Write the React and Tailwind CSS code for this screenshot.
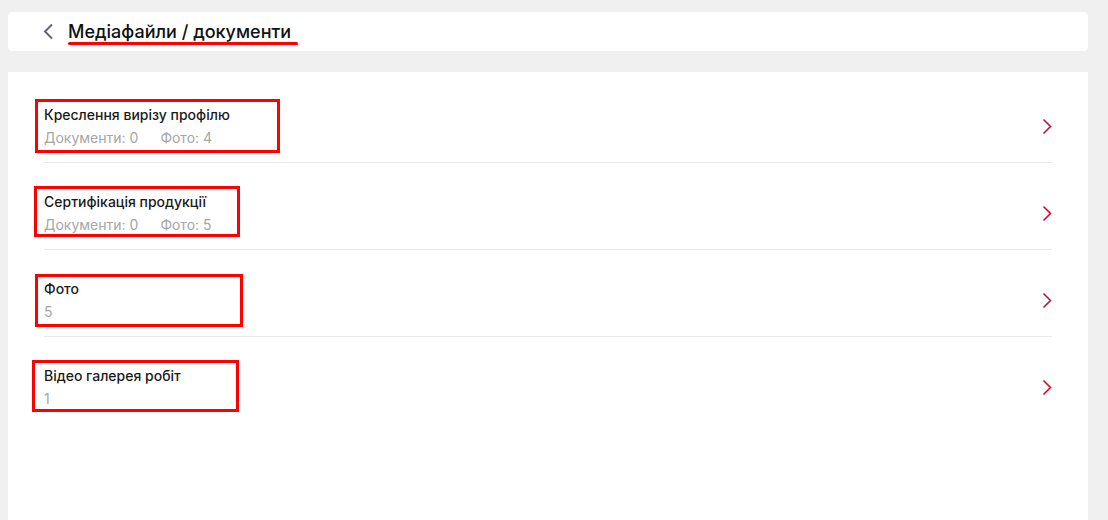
import React from 'react';

const items = [
  { title: 'Креслення вирізу профілю', docs: 0, photos: 4, box: 'left-[-9px] top-[-6px] w-[245px] h-[54px]' },
  { title: 'Сертифікація продукції', docs: 0, photos: 5, box: 'left-[-10px] top-[-6px] w-[206px] h-[51px]' },
  { title: 'Фото', count: 5, box: 'left-[-9px] top-[-5px] w-[208px] h-[53px]' },
  { title: 'Відео галерея робіт', count: 1, box: 'left-[-12px] top-[-6px] w-[207px] h-[52px]' },
];

const ChevronRight = () => (
  <svg width="10" height="17" viewBox="0 0 10 17" fill="none">
    <path d="M1.5 1.5L8.5 8.5L1.5 15.5" stroke="#c8102e" strokeWidth="1.6" />
  </svg>
);

const Row = ({ item, last }) => (
  <div className={`flex items-center justify-between pt-[29px] pb-[14px] ${last ? '' : 'border-b border-[#e9e9e9]'}`}>
    <div className="relative">
      <span className={`absolute border-[3px] border-[#ff0000] ${item.box}`} />
      <div className="text-[14px] leading-[20px] font-medium text-[#1a1a1a]">{item.title}</div>
      <div className="mt-[3px] text-[14px] leading-[20px] text-[#a6a6a6]">
        {item.count !== undefined ? (
          item.count
        ) : (
          <>
            <span>Документи: {item.docs}</span>
            <span className="ml-[22px]">Фото: {item.photos}</span>
          </>
        )}
      </div>
    </div>
    <ChevronRight />
  </div>
);

export default function App() {
  return (
    <div className="h-[520px] overflow-hidden bg-[#f0f0f0] pl-2 pr-5 pt-3" style={{ fontFamily: 'Inter, "Noto Sans", sans-serif' }}>
      <div className="h-[39px] rounded bg-white flex items-center pl-[35px]">
        <svg width="12" height="17" viewBox="0 0 12 17" fill="none">
          <path d="M9 1.5L2 8.5L9 15.5" stroke="#5f6677" strokeWidth="2" />
        </svg>
        <div className="relative ml-[13px]">
          <span className="text-[18px] leading-[24px] font-medium text-[#111]">Медіафайли / документи</span>
          <span className="absolute left-0 top-[22px] h-[3px] w-[230px] bg-[#ff0000] rounded-full" />
        </div>
      </div>
      <div className="mt-[21px] bg-white px-9 pt-[4px] h-[460px]">
        {items.map((item, i) => (
          <Row key={item.title} item={item} last={i === items.length - 1} />
        ))}
      </div>
    </div>
  );
}
